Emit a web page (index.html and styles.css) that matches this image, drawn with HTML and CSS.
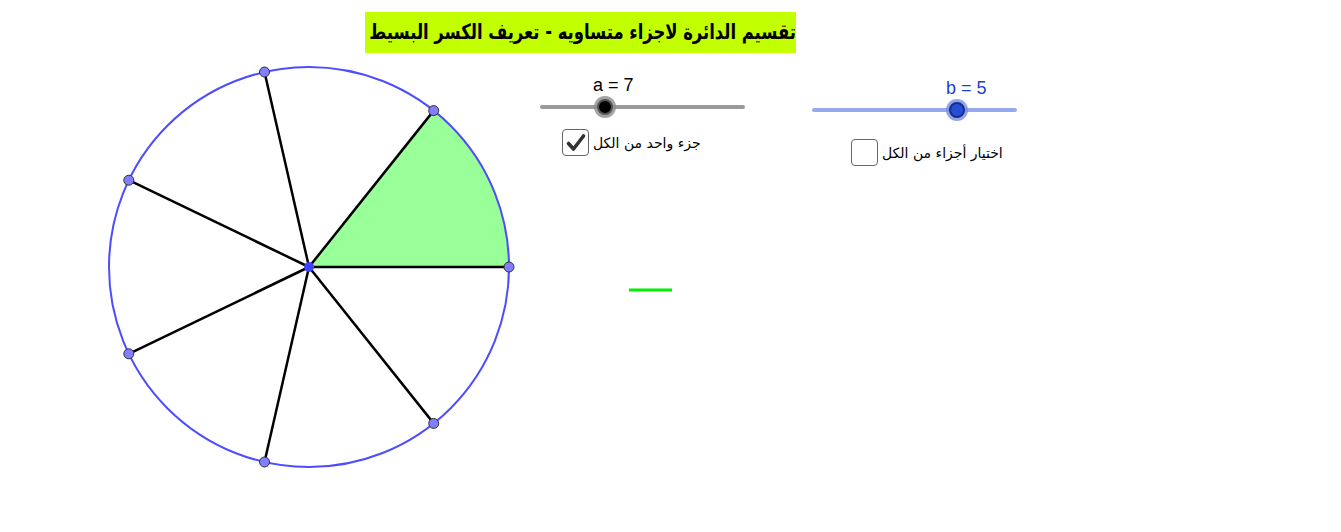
FILE: index.html
```html
<!DOCTYPE html>
<html lang="ar">
<head>
<meta charset="utf-8">
<title>تقسيم الدائرة</title>
<link rel="stylesheet" href="styles.css">
</head>
<body>
<div class="applet">
  <svg class="canvas" width="1341" height="532" viewBox="0 0 1341 532">
    <path class="sector" d="M309 267 L509 267 A200 200 0 0 0 433.7 110.6 Z"/>
    <circle class="circle" cx="309" cy="267" r="200"/>
    <g class="seg">
      <line x1="309" y1="267" x2="509" y2="267"/>
      <line x1="309" y1="267" x2="433.7" y2="110.6"/>
      <line x1="309" y1="267" x2="264.5" y2="72"/>
      <line x1="309" y1="267" x2="128.8" y2="180.2"/>
      <line x1="309" y1="267" x2="128.8" y2="353.8"/>
      <line x1="309" y1="267" x2="264.5" y2="462"/>
      <line x1="309" y1="267" x2="433.7" y2="423.4"/>
    </g>
    <g class="pt">
      <circle cx="509" cy="267" r="5"/>
      <circle cx="433.7" cy="110.6" r="5"/>
      <circle cx="264.5" cy="72" r="5"/>
      <circle cx="128.8" cy="180.2" r="5"/>
      <circle cx="128.8" cy="353.8" r="5"/>
      <circle cx="264.5" cy="462" r="5"/>
      <circle cx="433.7" cy="423.4" r="5"/>
    </g>
    <circle class="center" cx="309" cy="267" r="5"/>
    <line class="fracbar" x1="629" y1="290" x2="672" y2="290"/>
  </svg>

  <div class="title" dir="rtl"><span class="title-text">تقسيم الدائرة لاجزاء متساويه - تعريف الكسر البسيط</span></div>

  <div class="slider slider-a">
    <div class="slider-label">a = 7</div>
    <div class="track"><span class="knob" style="left: 65px"></span></div>
  </div>

  <div class="slider slider-b">
    <div class="slider-label">b = 5</div>
    <div class="track"><span class="knob" style="left: 145px"></span></div>
  </div>

  <label class="check check-a">
    <span class="box checked">
      <svg width="22" height="22" viewBox="0 0 22 22"><path d="M3.5 11.5 L8.5 17 L18.5 4" fill="none" stroke="#333" stroke-width="3.6" stroke-linecap="round" stroke-linejoin="round"/></svg>
    </span>
    <span class="check-text" dir="rtl">جزء واحد من الكل</span>
  </label>

  <label class="check check-b">
    <span class="box"></span>
    <span class="check-text" dir="rtl">اختيار أجزاء من الكل</span>
  </label>
</div>
</body>
</html>
```
FILE: styles.css
```css
html, body {
  margin: 0;
  padding: 0;
  background: #fff;
}
body {
  font-family: "DejaVu Sans", "Liberation Sans", sans-serif;
}
.applet {
  position: relative;
  width: 1341px;
  height: 532px;
  overflow: hidden;
  background: #fff;
}
.canvas {
  display: block;
}
.sector {
  fill: #99ff99;
  stroke: none;
}
.circle {
  fill: none;
  stroke: #4d4dff;
  stroke-width: 2;
}
.seg line {
  stroke: #000;
  stroke-width: 2.5;
}
.pt circle {
  fill: #7f7fff;
  stroke: #333;
  stroke-width: 1;
}
.center {
  fill: #4040ff;
}
.fracbar {
  stroke: #00ee00;
  stroke-width: 3;
}
.title {
  position: absolute;
  left: 365px;
  top: 12px;
  width: 431px;
  height: 41px;
  background: #c2ff00;
  color: #000;
  font-family: "DejaVu Sans", sans-serif;
  font-weight: bold;
  font-size: 21px;
  line-height: 40px;
  text-align: right;
  white-space: nowrap;
  overflow: hidden;
}
.title-text {
  display: inline-block;
  transform: scaleX(0.78);
  transform-origin: right center;
}
.slider {
  position: absolute;
  width: 205px;
}
.slider-a { left: 540px; top: 75px; }
.slider-b { left: 812px; top: 78px; }
.slider-label {
  font-family: "Liberation Sans", sans-serif;
  font-size: 18px;
  line-height: 20px;
  height: 20px;
  color: #000;
}
.slider-a .slider-label { padding-left: 53px; }
.slider-b .slider-label { padding-left: 134px; color: #1c3fd1; }
.track {
  position: relative;
  margin-top: 10px;
  height: 4px;
  border-radius: 2px;
  background: #999;
}
.slider-b .track { background: #98a8ee; }
.knob {
  position: absolute;
  top: 2px;
  width: 12px;
  height: 12px;
  margin: -8px 0 0 -8px;
  border-radius: 50%;
  background: #000;
  border: 2px solid #555;
  box-shadow: 0 0 0 3px rgba(140,140,140,0.8);
}
.slider-b .knob {
  background: #2450d8;
  border-color: #1a2d80;
  box-shadow: 0 0 0 3px rgba(120,140,235,0.8);
}
.check {
  position: absolute;
  display: flex;
  align-items: center;
  gap: 4px;
}
.check-a { left: 562px; top: 129px; }
.check-b { left: 851px; top: 139px; }
.box {
  box-sizing: border-box;
  width: 27px;
  height: 27px;
  border: 1.5px solid #666;
  border-radius: 4px;
  background: #fff;
  display: flex;
  align-items: center;
  justify-content: center;
}
.check-text {
  font-family: "DejaVu Sans", sans-serif;
  font-size: 14px;
  color: #000;
  white-space: nowrap;
}
```
